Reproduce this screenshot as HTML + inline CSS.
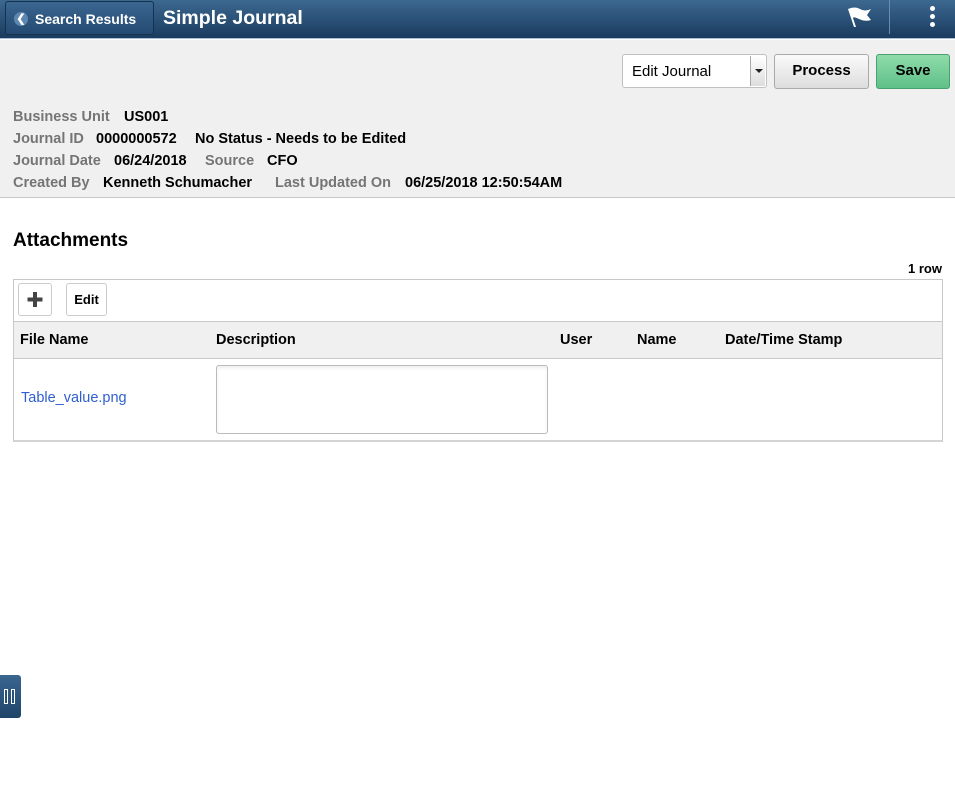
<!DOCTYPE html>
<html><head><style>
*{box-sizing:border-box;margin:0;padding:0}
body{width:955px;height:793px;background:#fff;font-family:"Liberation Sans",Arial,sans-serif;position:relative;overflow:hidden;font-size:14px}
.hdr{position:absolute;left:0;top:0;width:955px;height:39px;background:linear-gradient(#3c6890,#1a3b5e);border-bottom:1px solid #a9c0d6}
.back{position:absolute;left:5px;top:1px;width:149px;height:34px;border:1px solid #15324f;border-radius:3px;background:linear-gradient(#3a6690,#244a72);color:#fff;font-weight:bold;font-size:14px}
.back .c{position:absolute;left:8px;top:10px;width:14px;height:14px;border-radius:50%;background:#5d87b0;color:#fff;font-size:11px;line-height:14px;text-align:center}
.back span.t{position:absolute;left:29px;top:9px}
.title{position:absolute;left:163px;top:7px;color:#fff;font-weight:bold;font-size:19.5px}
.sep{position:absolute;left:889px;top:0;width:1px;height:34px;background:#6a8bab}
.dots{position:absolute;left:930px;top:6px}
.dots i{display:block;width:5px;height:5px;border-radius:50%;background:#fff;margin-bottom:3px}
.gray{position:absolute;left:0;top:40px;width:955px;height:158px;background:#f0f0f0;border-bottom:1px solid #c8c8c8}
.sel{position:absolute;left:622px;top:54px;width:145px;height:34px;background:#fff;border:1px solid #c0c0c0;border-radius:3px;font-size:15px;padding:8px 0 0 9px}
.sel .a{position:absolute;right:1px;top:1px;width:15px;height:30px;border-left:1px solid #aaa;background:linear-gradient(#fff,#ddd)}
.sel .a:after{content:"";position:absolute;left:4px;top:13px;border:4px solid transparent;border-top:4px solid #222;border-bottom:0}
.btn{position:absolute;top:54px;height:35px;border-radius:3px;font-weight:bold;font-size:15px;text-align:center;line-height:32px}
.proc{left:774px;width:95px;border:1px solid #aaa;background:linear-gradient(#fafafa,#ddd);color:#000}
.save{left:876px;width:74px;border:1px solid #4aa070;background:linear-gradient(#8fdcaa,#5fc088);color:#000}
.i{position:absolute;font-size:14.5px;font-weight:bold;white-space:nowrap}
.l{color:#757575}
h2{position:absolute;left:13px;top:230px;font-size:19px;font-weight:bold}
.rows{position:absolute;left:908px;top:261px;font-size:13px;font-weight:bold}
.grid{position:absolute;left:13px;top:279px;width:930px;height:163px;border:1px solid #c8c8c8;border-bottom:2px solid #d4d4d4}
.tb{position:absolute;width:34px;height:33px;border:1px solid #ccc;border-radius:3px;background:#fff;top:3px}
.th{position:absolute;left:0;top:41px;width:928px;height:38px;background:#f0f0f0;border-top:1px solid #c8c8c8;border-bottom:1px solid #c8c8c8}
.th span{position:absolute;top:10px;font-weight:bold;font-size:14.5px}
.ta{position:absolute;left:202px;top:85px;width:332px;height:69px;border:1px solid #bbb;border-radius:3px;box-shadow:inset 0 2px 3px #eee}
.link{position:absolute;left:7px;top:110px;color:#2f5fd0;font-size:14.5px}
.tab{position:absolute;left:0;top:675px;width:21px;height:43px;background:linear-gradient(#3a6690,#1f4469);border-radius:0 3px 3px 0}
.tab i{position:absolute;top:14px;width:4px;height:15px;border:1px solid #fff;background:#2a5078}
</style></head><body>
<div class="hdr">
 <div class="back"><span class="c">&#10094;</span><span class="t">Search Results</span></div>
 <div class="title">Simple Journal</div>
 <svg style="position:absolute;left:847px;top:6px" width="25" height="22" viewBox="0 0 25 22"><path d="M1 3 Q8 0 13 3 T24 3 L20 9 L24 14 Q18 16 12 13 T6 12 L9 21 L7 21 Z" fill="#fff"/></svg>
 <div class="sep"></div>
 <div class="dots"><i></i><i></i><i></i></div>
</div>
<div class="gray"></div>
<div class="sel">Edit Journal<div class="a"></div></div>
<div class="btn proc">Process</div>
<div class="btn save">Save</div>
<div class="i l" style="left:13px;top:109px">Business Unit</div><div class="i" style="left:124px;top:109px">US001</div>
<div class="i l" style="left:13px;top:131px">Journal ID</div><div class="i" style="left:96px;top:131px">0000000572</div><div class="i" style="left:195px;top:131px">No Status - Needs to be Edited</div>
<div class="i l" style="left:13px;top:153px">Journal Date</div><div class="i" style="left:114px;top:153px">06/24/2018</div><div class="i l" style="left:205px;top:153px">Source</div><div class="i" style="left:267px;top:153px">CFO</div>
<div class="i l" style="left:13px;top:175px">Created By</div><div class="i" style="left:103px;top:175px">Kenneth Schumacher</div><div class="i l" style="left:275px;top:175px">Last Updated On</div><div class="i" style="left:405px;top:175px">06/25/2018 12:50:54AM</div>
<h2>Attachments</h2>
<div class="rows">1 row</div>
<div class="grid">
 <div class="tb" style="left:4px"><svg width="32" height="31" viewBox="0 0 32 31"><path d="M16 8V23M8.5 15.5H23.5" stroke="#444" stroke-width="4"/></svg></div>
 <div class="tb" style="left:52px;width:41px;font-weight:bold;font-size:13px;text-align:center;line-height:31px">Edit</div>
 <div class="th"><span style="left:6px">File Name</span><span style="left:202px">Description</span><span style="left:546px">User</span><span style="left:623px">Name</span><span style="left:711px">Date/Time Stamp</span></div>
 <div class="link">Table_value.png</div>
 <div class="ta"></div>
</div>
<div class="tab"><i style="left:4px"></i><i style="left:11px"></i></div>
</body></html>
